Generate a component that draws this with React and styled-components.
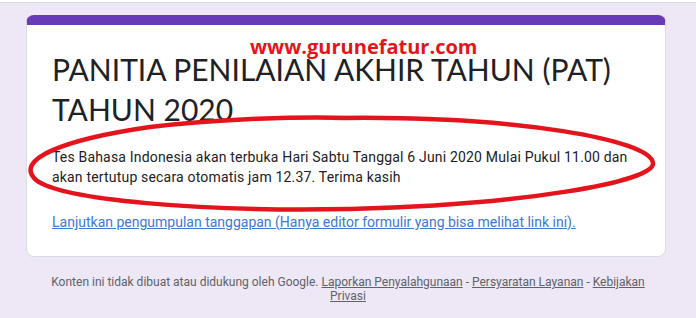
import React from "react";
import styled, { createGlobalStyle } from "styled-components";

const GlobalStyle = createGlobalStyle`
    html, body {
        margin: 0;
        padding: 0;
        background: #ede7f6;
    }
    body {
        font-family: Roboto, "Liberation Sans", sans-serif;
    }
`;

const Page = styled.div`
    position: relative;
    width: 696px;
    height: 318px;
    overflow: hidden;
    background: #ede7f6;
`;

const TopRule = styled.div`
    height: 2px;
    background: #ffffff;
    border-bottom: 1px solid #d9d7de;
`;

const Card = styled.section`
    position: relative;
    margin: 12px 0 0 26px;
    width: 640px;
    box-sizing: border-box;
    background: #ffffff;
    border: 1px solid #dadce0;
    border-top: 10px solid #673ab7;
    border-radius: 8px;
    padding: 24px 24px 24px 25px;
`;

const Watermark = styled.div`
    position: absolute;
    top: 8px;
    left: 223px;
    font-family: "Open Sans", "Liberation Sans", sans-serif;
    font-weight: 700;
    font-size: 20px;
    color: #e4141c;
`;

const Title = styled.h1`
    margin: 0;
    font-family: Lato, "Open Sans", sans-serif;
    font-weight: 400;
    font-size: 30px;
    line-height: 40px;
    color: #202124;
`;

const Description = styled.p`
    margin: 18px 0 0;
    font-size: 14px;
    line-height: 20px;
    letter-spacing: 0.18px;
    color: #202124;
`;

const EditLink = styled.a`
    display: block;
    margin-top: 25px;
    font-size: 14px;
    line-height: 20px;
    color: #3b78d8;
    text-decoration: underline;
`;

const Footer = styled.footer`
    display: flex;
    justify-content: center;
    margin-top: 18px;
`;

const FooterText = styled.div`
    width: 604px;
    text-align: center;
    font-size: 12px;
    line-height: 14px;
    color: #5f6368;

    a {
        color: #5f6368;
        text-decoration: underline;
    }
`;

const Scribble = styled.svg`
    position: absolute;
    left: 0;
    top: 0;
    pointer-events: none;
`;

export default function App() {
    return (
        <>
            <GlobalStyle />
            <Page>
                <TopRule />
                <Card>
                    <Watermark>www.gurunefatur.com</Watermark>
                    <Title>PANITIA PENILAIAN AKHIR TAHUN (PAT) TAHUN 2020</Title>
                    <Description>
                        Tes Bahasa Indonesia akan terbuka Hari Sabtu Tanggal 6 Juni 2020 Mulai Pukul 11.00 dan
                        akan tertutup secara otomatis jam 12.37. Terima kasih
                    </Description>
                    <EditLink href="#">
                        Lanjutkan pengumpulan tanggapan (Hanya editor formulir yang bisa melihat link ini).
                    </EditLink>
                </Card>
                <Footer>
                    <FooterText>
                        Konten ini tidak dibuat atau didukung oleh Google. <a href="#">Laporkan Penyalahgunaan</a>{" "}
                        - <a href="#">Persyaratan Layanan</a> - <a href="#">Kebijakan Privasi</a>
                    </FooterText>
                </Footer>
                <Scribble width="696" height="318" viewBox="0 0 696 318">
                    <path
                        d="M 340 118 C 520 116, 650 140, 653 163 C 655 182, 520 205, 350 209 C 200 212, 62 200, 36 180 C 14 160, 60 140, 150 127 C 220 119, 300 116, 350 118"
                        fill="none"
                        stroke="#e4141c"
                        strokeWidth="4.5"
                        strokeLinecap="round"
                    />
                </Scribble>
            </Page>
        </>
    );
}
